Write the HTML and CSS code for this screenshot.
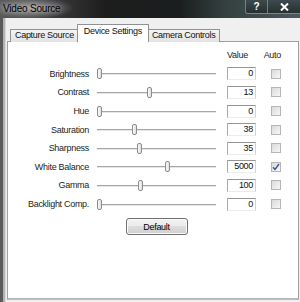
FILE: index.html
```
<!DOCTYPE html>
<html lang="en">
<head>
  <meta charset="UTF-8">
  <title>Video Source</title>
  <link rel="stylesheet" href="styles.css">
</head>
<body>

  <div class="window">
    <div class="titlebar">
      <span class="title">Video Source</span>
      <div class="caption-buttons">
        <span class="cap-btn help">?</span>
        <span class="cap-btn close">
          <svg width="9" height="8" viewBox="0 0 9 8"><path d="M1 0.5 L8 7.5 M8 0.5 L1 7.5" stroke="#fff" stroke-width="2"/></svg>
        </span>
      </div>
    </div>

    <div class="client">
      <div class="tabs">
        <div class="tab">Capture Source</div>
        <div class="tab active">Device Settings</div>
        <div class="tab">Camera Controls</div>
      </div>

      <div class="panel">
        <div class="settings">
          <span></span>
          <span></span>
          <span class="col-head">Value</span>
          <span class="col-head auto-head">Auto</span>

          <span class="label">Brightness</span>
          <div class="slider"><span class="thumb" style="left: 0px"></span></div>
          <span class="value">0</span>
          <span class="check"></span>

          <span class="label">Contrast</span>
          <div class="slider"><span class="thumb" style="left: 50px"></span></div>
          <span class="value">13</span>
          <span class="check"></span>

          <span class="label">Hue</span>
          <div class="slider"><span class="thumb" style="left: 0px"></span></div>
          <span class="value">0</span>
          <span class="check"></span>

          <span class="label">Saturation</span>
          <div class="slider"><span class="thumb" style="left: 35px"></span></div>
          <span class="value">38</span>
          <span class="check"></span>

          <span class="label">Sharpness</span>
          <div class="slider"><span class="thumb" style="left: 40px"></span></div>
          <span class="value">35</span>
          <span class="check"></span>

          <span class="label">White Balance</span>
          <div class="slider"><span class="thumb" style="left: 68px"></span></div>
          <span class="value">5000</span>
          <span class="check checked">
            <svg width="8" height="8" viewBox="0 0 8 8"><path d="M1 4.2 L3 6.5 L7 1" fill="none" stroke="#3b4f8f" stroke-width="1.3"/></svg>
          </span>

          <span class="label">Gamma</span>
          <div class="slider"><span class="thumb" style="left: 41px"></span></div>
          <span class="value">100</span>
          <span class="check"></span>

          <span class="label">Backlight Comp.</span>
          <div class="slider"><span class="thumb" style="left: 0px"></span></div>
          <span class="value">0</span>
          <span class="check"></span>

          <div class="actions">
            <button class="btn" type="button">Default</button>
          </div>
        </div>
      </div>
    </div>
  </div>

</body>
</html>
```

FILE: styles.css
```
* {
  margin: 0;
  padding: 0;
  box-sizing: border-box;
  font-family: 'Liberation Sans', Arial, sans-serif;
}

body {
  width: 300px;
  height: 302px;
  overflow: hidden;
  background: #f0f0f0;
}

.window {
  height: 302px;
  display: flex;
  flex-direction: column;
}

/* Title bar */
.titlebar {
  height: 18px;
  display: flex;
  align-items: flex-start;
  overflow: hidden;
  background:
    radial-gradient(ellipse 42px 11px at 32px 8px, rgba(190, 190, 190, 0.75), rgba(190, 190, 190, 0)),
    linear-gradient(90deg, #5a5a5a 0, #3c3c3c 50px, #1d1d1d 105px, #1b1e1f 180px, #34403f 225px, #4c5a5f 300px);
}

.title {
  padding-left: 3px;
  line-height: 17px;
  font-size: 10px;
  letter-spacing: -0.2px;
  color: #000;
  text-shadow: 0 0 4px rgba(255, 255, 255, 0.6);
}

.caption-buttons {
  margin-left: auto;
  display: flex;
}

.cap-btn {
  height: 14px;
  display: flex;
  align-items: center;
  justify-content: center;
  border: 1px solid rgba(170, 185, 195, 0.55);
  border-top: none;
  background: linear-gradient(#3d4a50, #27302f);
  color: #fff;
  font-size: 10px;
  font-weight: bold;
}

.help {
  width: 23px;
  border-radius: 0 0 0 3px;
}

.close {
  width: 32px;
  border-right: none;
  border-left: none;
}

/* Client area with window frame at left */
.client {
  flex: 1;
  display: flex;
  flex-direction: column;
  padding: 6px 1px 2px 7px;
  background: linear-gradient(90deg, #5a5a5a 0 3px, #b2b2b2 3px 5px, #dadada 5px 6px, #f0f0f0 6px);
}

/* Tabs */
.tabs {
  display: flex;
  align-items: flex-end;
  padding-left: 3px;
  margin-bottom: -1px;
  position: relative;
  z-index: 1;
}

.tab {
  height: 13px;
  padding: 0 4px;
  border: 1px solid #8e9196;
  border-bottom: none;
  background: linear-gradient(#f4f4f4, #e2e2e2);
  font-size: 9px;
  letter-spacing: -0.3px;
  line-height: 11px;
  color: #111;
  white-space: nowrap;
}

.tab.active {
  height: 18px;
  margin: 0 -2px;
  padding: 1px 6px 0;
  background: #fff;
  position: relative;
  z-index: 2;
}

/* Panel */
.panel {
  flex: 1;
  background: #fff;
  border: 1px solid #9c9fa4;
  border-bottom: 2px solid #b8babd;
  padding-top: 4px;
}

.settings {
  display: grid;
  grid-template-columns: 81px 138px 36px 18px;
  grid-auto-rows: 18.6px;
  align-items: center;
  font-size: 9px;
  letter-spacing: -0.3px;
  color: #1c1c1c;
}

.col-head {
  line-height: 11px;
}

.auto-head {
  text-align: right;
}

.label {
  text-align: right;
  white-space: nowrap;
}

.slider {
  position: relative;
  height: 11px;
  margin: 0 11px 0 8px;
}

.slider::before {
  content: "";
  position: absolute;
  left: 0;
  right: 0;
  top: 5px;
  height: 1px;
  background: #a6a6a6;
  box-shadow: 0 1px 0 #e6e6e6;
}

.thumb {
  position: absolute;
  top: 0;
  width: 5px;
  height: 11px;
  border: 1px solid #8c8c8c;
  border-radius: 2px;
  background: linear-gradient(90deg, #fbfbfb, #dedede);
}

.value {
  width: 29px;
  height: 13px;
  padding-right: 2px;
  border-top: 1px solid #959595;
  border-left: 1px solid #a9a9a9;
  border-right: 1px solid #d2d2d2;
  border-bottom: 1px solid #ececec;
  text-align: right;
  line-height: 11px;
  color: #111;
}

.check {
  justify-self: end;
  width: 10px;
  height: 10px;
  display: flex;
  align-items: center;
  justify-content: center;
  border: 1px solid #b6b6b6;
  background: linear-gradient(135deg, #dadada, #f7f7f7);
}

.actions {
  grid-column: 2;
  display: flex;
  justify-content: center;
  margin: 5px 11px 0 8px;
  align-self: start;
}

.btn {
  width: 62px;
  height: 17px;
  border: 1px solid #707070;
  border-radius: 3px;
  background: linear-gradient(#f2f2f2 0%, #ebebeb 50%, #dddddd 50%, #cfcfcf 100%);
  box-shadow: inset 0 0 0 1px #fbfbfb;
  font-size: 9px;
  letter-spacing: -0.3px;
  color: #000;
}
```
